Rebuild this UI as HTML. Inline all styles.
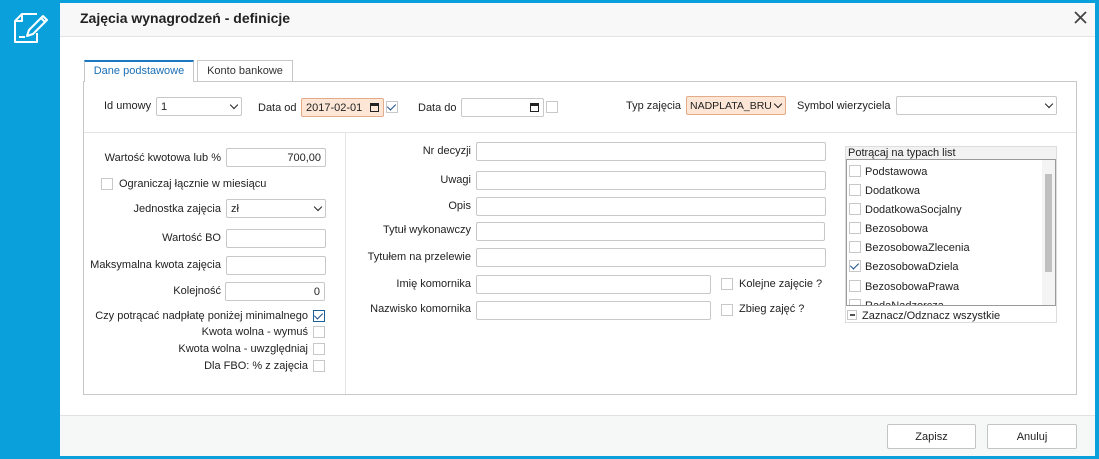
<!DOCTYPE html>
<html><head><meta charset="utf-8"><style>
*{box-sizing:border-box;margin:0;padding:0}
body{width:1099px;height:459px;background:#0aa0dc;position:relative;overflow:hidden;font-family:"Liberation Sans",sans-serif;font-size:11px;color:#222}
.a{position:absolute}
.dlg{left:60px;top:3px;width:1035px;height:453px;background:#fff}
.hdr{left:60px;top:3px;width:1035px;height:34px;background:#f8f8f8;border-bottom:1px solid #e4e4e4}
.ftr{left:60px;top:415px;width:1035px;height:41px;background:#f6f8f8;border-top:1px solid #e2e2e2}
.in{position:absolute;height:19px;border:1px solid #c8c8c8;border-radius:2px;background:#fff;padding:1px 4px 0;line-height:17px;white-space:nowrap;overflow:hidden}
.lbl{position:absolute;white-space:nowrap;line-height:14px}
.r{text-align:right}
.cb{position:absolute;width:12px;height:12px;border:1px solid #c8c8c8;background:#fff}
.chev{position:absolute;right:4px;top:4px;width:6px;height:6px;border-right:1.5px solid #222;border-bottom:1.5px solid #222;transform:rotate(45deg)}
.btn{position:absolute;height:25px;border:1px solid #c4c4c4;border-radius:2px;background:#fff;text-align:center;line-height:24px}
.chk{position:absolute;left:2px;top:0px;width:5px;height:8px;border-right:1.4px solid #1b4f8a;border-bottom:1.4px solid #1b4f8a;transform:rotate(45deg)}
</style></head><body>
<div class="a dlg"></div>
<div class="a hdr"></div>
<svg class="a" style="left:11px;top:9px" width="38" height="38" viewBox="0 0 38 38" fill="none" stroke="#fff" stroke-width="2" stroke-linejoin="round"><path d="M11 5h15M4 12v21h22v-9M4 12l7-7v7z"/><path d="M16 27l2-6 14-14 4 4-14 14z M30 9l4 4"/><path d="M8 28h6"/></svg>
<div class="lbl" style="left:80px;top:11px;font-size:14px;font-weight:bold;color:#222">Zajęcia wynagrodzeń - definicje</div>
<svg class="a" style="left:1074px;top:11px" width="13" height="13"><path d="M1 1L12 12M12 1L1 12" stroke="#444" stroke-width="1.8"/></svg>
<div class="a" style="left:84px;top:60px;width:110px;height:22px;border:1px solid #c8c8c8;border-top:2px solid #1a78c2;border-bottom:none;background:#fff;z-index:2;color:#1a6fb5;text-align:center;line-height:19px">Dane podstawowe</div>
<div class="a" style="left:197px;top:60px;width:96px;height:21px;border:1px solid #c8c8c8;border-bottom:none;background:#fff;text-align:center;line-height:20px;color:#333">Konto bankowe</div>
<div class="a" style="left:83px;top:81px;width:994px;height:314px;border:1px solid #c8c8c8;background:#fff"></div>
<div class="a" style="left:84px;top:132px;width:992px;height:1px;background:#e4e4e4"></div>
<div class="a" style="left:345px;top:133px;width:1px;height:261px;background:#e4e4e4"></div>
<!-- row1 -->
<div class="lbl" style="left:104px;top:99px">Id umowy</div>
<div class="in" style="left:156px;top:97px;width:86px">1<span class="chev"></span></div>
<div class="lbl" style="left:258px;top:101px">Data od</div>
<div class="in" style="left:301px;top:98px;width:83px;background:#fde6d5;border-color:#e3ab88">2017-02-01<span style="position:absolute;right:4px;top:4px;width:9px;height:9px;border:1.5px solid #222;border-top-width:3px"></span></div>
<div class="cb" style="left:386px;top:101px"><span class="chk"></span></div>
<div class="lbl" style="left:418px;top:101px">Data do</div>
<div class="in" style="left:461px;top:98px;width:83px"><span style="position:absolute;right:4px;top:4px;width:9px;height:9px;border:1.5px solid #222;border-top-width:3px"></span></div>
<div class="cb" style="left:546px;top:101px"></div>
<div class="lbl" style="left:626px;top:99px">Typ zajęcia</div>
<div class="in" style="left:686px;top:96px;width:100px;background:#fde6d5;border-color:#e3ab88;padding-left:3px;font-size:10.5px">NADPLATA_BRU<span class="chev" style="background:#fde6d5"></span></div>
<div class="lbl" style="left:797px;top:99px">Symbol wierzyciela</div>
<div class="in" style="left:896px;top:96px;width:161px"><span class="chev"></span></div>
<!-- left -->
<div class="lbl r" style="left:84px;width:137px;top:151px">Wartość kwotowa lub %</div>
<div class="in r" style="left:226px;top:148px;width:100px">700,00</div>
<div class="cb" style="left:101px;top:178px"></div>
<div class="lbl" style="left:119px;top:177px">Ograniczaj łącznie w miesiącu</div>
<div class="lbl r" style="left:84px;width:137px;top:202px">Jednostka zajęcia</div>
<div class="in" style="left:226px;top:199px;width:100px">zł<span class="chev"></span></div>
<div class="lbl r" style="left:84px;width:137px;top:231px">Wartość BO</div>
<div class="in" style="left:226px;top:229px;width:100px"></div>
<div class="lbl r" style="left:64px;width:157px;top:258px">Maksymalna kwota zajęcia</div>
<div class="in" style="left:226px;top:256px;width:100px"></div>
<div class="lbl r" style="left:84px;width:137px;top:284px">Kolejność</div>
<div class="in r" style="left:225px;top:282px;width:100px">0</div>
<div class="lbl r" style="left:64px;width:244px;top:309px">Czy potrącać nadpłatę poniżej minimalnego</div>
<div class="cb" style="left:313px;top:310px;border-color:#1a5f9a"><span class="chk"></span></div>
<div class="lbl r" style="left:64px;width:244px;top:325px">Kwota wolna - wymuś</div>
<div class="cb" style="left:313px;top:326px"></div>
<div class="lbl r" style="left:64px;width:244px;top:342px">Kwota wolna - uwzględniaj</div>
<div class="cb" style="left:313px;top:343px"></div>
<div class="lbl r" style="left:64px;width:244px;top:359px">Dla FBO: % z zajęcia</div>
<div class="cb" style="left:313px;top:360px"></div>
<!-- middle -->
<div class="lbl r" style="left:350px;width:121px;top:144px">Nr decyzji</div>
<div class="in" style="left:476px;top:142px;width:350px"></div>
<div class="lbl r" style="left:350px;width:121px;top:173px">Uwagi</div>
<div class="in" style="left:476px;top:171px;width:350px"></div>
<div class="lbl r" style="left:350px;width:121px;top:199px">Opis</div>
<div class="in" style="left:476px;top:197px;width:350px"></div>
<div class="lbl r" style="left:350px;width:121px;top:223px">Tytuł wykonawczy</div>
<div class="in" style="left:476px;top:222px;width:349px"></div>
<div class="lbl r" style="left:350px;width:121px;top:250px">Tytułem na przelewie</div>
<div class="in" style="left:476px;top:248px;width:350px"></div>
<div class="lbl r" style="left:350px;width:121px;top:277px">Imię komornika</div>
<div class="in" style="left:476px;top:275px;width:235px"></div>
<div class="cb" style="left:721px;top:278px"></div>
<div class="lbl" style="left:739px;top:277px">Kolejne zajęcie ?</div>
<div class="lbl r" style="left:350px;width:121px;top:302px">Nazwisko komornika</div>
<div class="in" style="left:476px;top:301px;width:235px"></div>
<div class="cb" style="left:721px;top:304px"></div>
<div class="lbl" style="left:739px;top:302px">Zbieg zajęć ?</div>
<!-- list -->
<div class="a" style="left:845px;top:146px;width:212px;height:177px;border:1px solid #ddd;background:#fff"></div>
<div class="a" style="left:846px;top:147px;width:210px;height:12px;background:#f2f2f2"></div>
<div class="lbl" style="left:848px;top:146px">Potrącaj na typach list</div>
<div class="a" style="left:846px;top:159px;width:210px;height:147px;border:1px solid #9a9a9a;overflow:hidden">
<div style="position:absolute;right:0;top:0;width:13px;height:145px;background:#f4f4f4"></div>
<div style="position:absolute;right:3px;top:14px;width:7px;height:98px;background:#c0c0c0"></div>
<div class="lbl" style="left:2px;top:5px"><span class="cb" style="position:relative;display:inline-block;vertical-align:-2px;margin-right:4px"></span>Podstawowa</div>
<div class="lbl" style="left:2px;top:24px"><span class="cb" style="position:relative;display:inline-block;vertical-align:-2px;margin-right:4px"></span>Dodatkowa</div>
<div class="lbl" style="left:2px;top:43px"><span class="cb" style="position:relative;display:inline-block;vertical-align:-2px;margin-right:4px"></span>DodatkowaSocjalny</div>
<div class="lbl" style="left:2px;top:62px"><span class="cb" style="position:relative;display:inline-block;vertical-align:-2px;margin-right:4px"></span>Bezosobowa</div>
<div class="lbl" style="left:2px;top:81px"><span class="cb" style="position:relative;display:inline-block;vertical-align:-2px;margin-right:4px"></span>BezosobowaZlecenia</div>
<div class="lbl" style="left:2px;top:100px"><span class="cb" style="position:relative;display:inline-block;vertical-align:-2px;margin-right:4px"><span class="chk"></span></span>BezosobowaDziela</div>
<div class="lbl" style="left:2px;top:120px"><span class="cb" style="position:relative;display:inline-block;vertical-align:-2px;margin-right:4px"></span>BezosobowaPrawa</div>
<div class="lbl" style="left:2px;top:139px"><span class="cb" style="position:relative;display:inline-block;vertical-align:-2px;margin-right:4px"></span>RadaNadzorcza</div>
</div>
<div class="cb" style="left:847px;top:310px;width:10px;height:10px"><span style="position:absolute;left:2px;top:3px;width:5px;height:2px;background:#555"></span></div>
<div class="lbl" style="left:862px;top:309px">Zaznacz/Odznacz wszystkie</div>
<div class="a ftr"></div>
<div class="btn" style="left:887px;top:424px;width:89px">Zapisz</div>
<div class="btn" style="left:987px;top:424px;width:90px">Anuluj</div>
</body></html>
